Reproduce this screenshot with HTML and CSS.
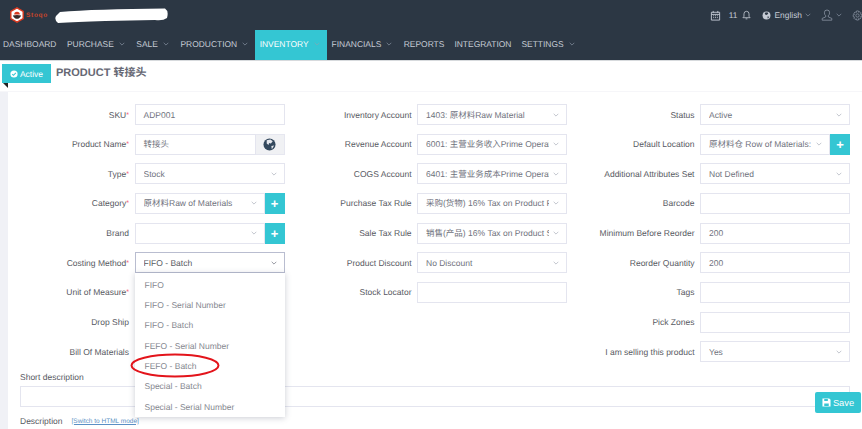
FILE: index.html
```html
<!DOCTYPE html>
<html lang="en">
<head>
<meta charset="utf-8">
<title>Product</title>
<link rel="stylesheet" href="styles.css">
</head>
<body>
<header class="top">
  <div class="topbar">
    <div class="brand-wrap">
      <svg class="logo" viewBox="0 0 14 16"><polygon points="7,0.8 13.2,4.4 13.2,11.6 7,15.2 0.8,11.6 0.8,4.4" fill="#fff" stroke="#d8381f" stroke-width="1.4"/><path d="M4.2 7.600a2.800 2.800 0 0 1 5.600 0z" fill="#d8381f"/><path d="M2.800 8.400 Q7 7.400 11.200 8.400 Q9.500 11.800 7 11.800 Q4.500 11.800 2.800 8.400Z" fill="#3a2a2a"/></svg>
      <span class="logo-text">Stoqo</span>
      <svg class="redact" viewBox="0 0 113 15" preserveAspectRatio="none"><path d="M5 4 Q40 1 110 .5 Q114 3 112 10 Q108 13 100 12 L50 13 Q20 14 3 15 Q-1 12 1 8Z" fill="#fff"/></svg>
    </div>
    <div class="tools">
      <svg class="ic cal" viewBox="0 0 12 12"><path d="M1.500 2.500h9v8.500h-9zM1.500 4.800h9M3.500 1v2M8.500 1v2" fill="none" stroke="#c5cbd5"/><path d="M3.500 6.300h1M5.500 6.300h1M7.500 6.300h1M3.500 8.300h1M5.500 8.300h1M7.500 8.300h1" stroke="#c5cbd5"/></svg>
      <span class="count">11</span>
      <svg class="ic bell" viewBox="0 0 10 11"><path d="M1 8.500h8L7.800 7V4.200a2.800 2.800 0 0 0-5.600 0V7zM4 9.800h2" fill="none" stroke="#c5cbd5" stroke-width=".9"/></svg>
      <svg class="ic globe" viewBox="0 0 10 10"><circle cx="5" cy="5" r="4.400" fill="#c5cbd5"/><path d="M3 2l3-.6 1 1.600-2 1.400-1.500-.4zM6 6l2 .3-1.500 2.200z" fill="#2c3744"/></svg>
      <span class="lang">English</span>
      <svg class="chev lang-chev" viewBox="0 0 6 4"><path d="M.7.8 3 3.100 5.300.8" fill="none" stroke="#7f8a99" stroke-width=".8"/></svg>
      <svg class="ic user" viewBox="0 0 12 12"><path d="M6 1a2.600 2.600 0 0 0-2.600 2.800c0 1.400.6 2.400 1.400 3L4.600 8 1.200 9.400v1.800h9.600V9.400L7.400 8 7.200 6.800c.8-.6 1.400-1.600 1.400-3A2.600 2.600 0 0 0 6 1z" fill="none" stroke="#8a94a3" stroke-width=".8"/></svg>
      <svg class="chev user-chev" viewBox="0 0 6 4"><path d="M.7.8 3 3.100 5.300.8" fill="none" stroke="#7f8a99" stroke-width=".8"/></svg>
      <svg class="ic gear" viewBox="0 0 12 12"><circle cx="6" cy="6" r="1.800" fill="none" stroke="#8a94a3" stroke-width=".8"/><path d="M5 1h2l.3 1.500 1.300-.7 1.400 1.400-.8 1.300 1.500.5v2l-1.500.3.800 1.300-1.400 1.400-1.300-.8L7 11H5l-.3-1.500-1.300.8L2 8.900l.8-1.300L1.300 7.200v-2l1.500-.4L2 3.500l1.400-1.400 1.300.7z" fill="none" stroke="#8a94a3" stroke-width=".8"/></svg>
    </div>
  </div>
  <nav class="nav">
    <a class="nav-item plain first">DASHBOARD</a>
    <a class="nav-item">PURCHASE<svg class="chev" viewBox="0 0 6 4"><path d="M.7.8 3 3.100 5.300.8" fill="none" stroke="#7f8a99" stroke-width=".8"/></svg></a>
    <a class="nav-item">SALE<svg class="chev" viewBox="0 0 6 4"><path d="M.7.8 3 3.100 5.300.8" fill="none" stroke="#7f8a99" stroke-width=".8"/></svg></a>
    <a class="nav-item">PRODUCTION<svg class="chev" viewBox="0 0 6 4"><path d="M.7.8 3 3.100 5.300.8" fill="none" stroke="#7f8a99" stroke-width=".8"/></svg></a>
    <a class="nav-item active">INVENTORY<svg class="chev" viewBox="0 0 6 4"><path d="M.7.8 3 3.100 5.300.8" fill="none" stroke="#7fa8b5" stroke-width=".8"/></svg></a>
    <a class="nav-item">FINANCIALS<svg class="chev" viewBox="0 0 6 4"><path d="M.7.8 3 3.100 5.300.8" fill="none" stroke="#7f8a99" stroke-width=".8"/></svg></a>
    <a class="nav-item plain">REPORTS</a>
    <a class="nav-item plain">INTEGRATION</a>
    <a class="nav-item">SETTINGS<svg class="chev" viewBox="0 0 6 4"><path d="M.7.8 3 3.100 5.300.8" fill="none" stroke="#7f8a99" stroke-width=".8"/></svg></a>
  </nav>
</header>

<section class="subheader">
  <div class="badge">
    <svg class="badge-ic" viewBox="0 0 10 10"><circle cx="5" cy="5" r="4.500" fill="#fff"/><path d="M2.800 5.100 4.400 6.700 7.300 3.600" fill="none" stroke="#34c6d3" stroke-width="1.300"/></svg>
    <span>Active</span>
  </div>
  <h1 class="title">PRODUCT 转接头</h1>
</section>

<main class="page">
  <div class="content">
    <div class="form">
      <div class="col col-1">
        <div class="field"><label class="lbl">SKU<i>*</i></label><div class="ctl input">ADP001</div></div>
        <div class="field"><label class="lbl">Product Name<i>*</i></label><div class="group"><div class="ctl input grow">转接头</div><div class="addon"><svg class="globe-big" viewBox="0 0 14 14"><circle cx="7" cy="7" r="6.500" fill="#34495e"/><path d="M4 2.500l4-1 2.500 2-2 2.500-2-.5-.5 2-2-1.500zM9 8.500l3-.5-2.500 4z" fill="#e6e8ee"/></svg></div></div></div>
        <div class="field"><label class="lbl">Type<i>*</i></label><div class="ctl select"><span class="val">Stock</span><svg class="chev" viewBox="0 0 6 4"><path d="M.7.8 3 3.100 5.300.8" fill="none" stroke="#b4b7c2" stroke-width=".8"/></svg></div></div>
        <div class="field"><label class="lbl">Category<i>*</i></label><div class="group"><div class="ctl select grow"><span class="val">原材料Raw of Materials</span><svg class="chev" viewBox="0 0 6 4"><path d="M.7.8 3 3.100 5.300.8" fill="none" stroke="#b4b7c2" stroke-width=".8"/></svg></div><div class="plus">+</div></div></div>
        <div class="field"><label class="lbl">Brand</label><div class="group"><div class="ctl select grow"><span class="val"></span><svg class="chev" viewBox="0 0 6 4"><path d="M.7.8 3 3.100 5.300.8" fill="none" stroke="#b4b7c2" stroke-width=".8"/></svg></div><div class="plus">+</div></div></div>
        <div class="field costing"><label class="lbl">Costing Method<i>*</i></label><div class="ctl select focus"><span class="val">FIFO - Batch</span><svg class="chev" viewBox="0 0 6 4"><path d="M.7.8 3 3.100 5.300.8" fill="none" stroke="#7d808c" stroke-width=".8"/></svg></div>
          <ul class="menu">
            <li>FIFO</li>
            <li>FIFO - Serial Number</li>
            <li>FIFO - Batch</li>
            <li>FEFO - Serial Number</li>
            <li class="circled">FEFO - Batch<svg class="ring" viewBox="0 0 90 25"><ellipse cx="45" cy="12.500" rx="43.500" ry="11" fill="none" stroke="#e3141b" stroke-width="2"/></svg></li>
            <li>Special - Batch</li>
            <li>Special - Serial Number</li>
          </ul>
        </div>
        <div class="field"><label class="lbl">Unit of Measure<i>*</i></label><div class="ctl-space"></div></div>
        <div class="field"><label class="lbl">Drop Ship</label><div class="ctl-space"></div></div>
        <div class="field"><label class="lbl">Bill Of Materials</label><div class="ctl-space"></div></div>
      </div>
      <div class="col col-2">
        <div class="field"><label class="lbl">Inventory Account</label><div class="ctl select"><span class="val">1403: 原材料Raw Material</span><svg class="chev" viewBox="0 0 6 4"><path d="M.7.8 3 3.100 5.300.8" fill="none" stroke="#b4b7c2" stroke-width=".8"/></svg></div></div>
        <div class="field"><label class="lbl">Revenue Account</label><div class="ctl select"><span class="val">6001: 主营业务收入Prime Operating Revenue</span><svg class="chev" viewBox="0 0 6 4"><path d="M.7.8 3 3.100 5.300.8" fill="none" stroke="#b4b7c2" stroke-width=".8"/></svg></div></div>
        <div class="field"><label class="lbl">COGS Account</label><div class="ctl select"><span class="val">6401: 主营业务成本Prime Operating Cost</span><svg class="chev" viewBox="0 0 6 4"><path d="M.7.8 3 3.100 5.300.8" fill="none" stroke="#b4b7c2" stroke-width=".8"/></svg></div></div>
        <div class="field"><label class="lbl">Purchase Tax Rule</label><div class="ctl select"><span class="val">采购(货物) 16% Tax on Product Purchases</span><svg class="chev" viewBox="0 0 6 4"><path d="M.7.8 3 3.100 5.300.8" fill="none" stroke="#b4b7c2" stroke-width=".8"/></svg></div></div>
        <div class="field"><label class="lbl">Sale Tax Rule</label><div class="ctl select"><span class="val">销售(产品) 16% Tax on Product Sales</span><svg class="chev" viewBox="0 0 6 4"><path d="M.7.8 3 3.100 5.300.8" fill="none" stroke="#b4b7c2" stroke-width=".8"/></svg></div></div>
        <div class="field"><label class="lbl">Product Discount</label><div class="ctl select"><span class="val">No Discount</span><svg class="chev" viewBox="0 0 6 4"><path d="M.7.8 3 3.100 5.300.8" fill="none" stroke="#b4b7c2" stroke-width=".8"/></svg></div></div>
        <div class="field"><label class="lbl">Stock Locator</label><div class="ctl input"></div></div>
      </div>
      <div class="col col-3">
        <div class="field"><label class="lbl">Status</label><div class="ctl select"><span class="val">Active</span><svg class="chev" viewBox="0 0 6 4"><path d="M.7.8 3 3.100 5.300.8" fill="none" stroke="#b4b7c2" stroke-width=".8"/></svg></div></div>
        <div class="field"><label class="lbl">Default Location</label><div class="group"><div class="ctl select grow"><span class="val">原材料仓 Row of Materials: Stock</span><svg class="chev" viewBox="0 0 6 4"><path d="M.7.8 3 3.100 5.300.8" fill="none" stroke="#b4b7c2" stroke-width=".8"/></svg></div><div class="plus">+</div></div></div>
        <div class="field"><label class="lbl">Additional Attributes Set</label><div class="ctl select"><span class="val">Not Defined</span><svg class="chev" viewBox="0 0 6 4"><path d="M.7.8 3 3.100 5.300.8" fill="none" stroke="#b4b7c2" stroke-width=".8"/></svg></div></div>
        <div class="field"><label class="lbl">Barcode</label><div class="ctl input"></div></div>
        <div class="field"><label class="lbl">Minimum Before Reorder</label><div class="ctl input">200</div></div>
        <div class="field"><label class="lbl">Reorder Quantity</label><div class="ctl input">200</div></div>
        <div class="field"><label class="lbl">Tags</label><div class="ctl input"></div></div>
        <div class="field"><label class="lbl">Pick Zones</label><div class="ctl input"></div></div>
        <div class="field"><label class="lbl">I am selling this product</label><div class="ctl select"><span class="val">Yes</span><svg class="chev" viewBox="0 0 6 4"><path d="M.7.8 3 3.100 5.300.8" fill="none" stroke="#b4b7c2" stroke-width=".8"/></svg></div></div>
      </div>
    </div>
    <div class="wide">
      <div class="wide-label">Short description</div>
      <div class="ctl input full"></div>
      <div class="desc"><span class="wide-label">Description</span><a class="switch">[Switch to HTML mode]</a></div>
    </div>
  </div>
</main>

<button class="save"><svg class="save-ic" viewBox="0 0 10 10"><path d="M.5.500h7.500l1.500 1.500v7.500H.5z" fill="#fff"/><path d="M2.500 1.200h4v2h-4zM2.500 6h5v3h-5z" fill="#34c6d3"/></svg>Save</button>
</body>
</html>
```
FILE: styles.css
```css
* { box-sizing: border-box; }
html, body { margin: 0; height: 100%; overflow: hidden; }
body { font-family: "Liberation Sans", "Noto Sans CJK SC", sans-serif; font-size: 8.5px; color: #575962; background: #fff; text-rendering: geometricPrecision; }

.top { background: #2c3744; height: 61px; border-bottom: 1px solid #d7dadd; }
.topbar { height: 30px; display: flex; justify-content: space-between; align-items: center; }
.brand-wrap { display: flex; align-items: center; padding-left: 10px; }
.logo { width: 14px; height: 16px; }
.logo-text { font-size: 6.5px; font-weight: 700; color: #c8452a; letter-spacing: .7px; margin-left: 2px; width: 29px; }
.redact { width: 113px; height: 15px; }
.tools { display: flex; align-items: center; color: #c5cbd5; font-size: 8.4px; }
.ic { display: block; }
.cal { width: 11px; height: 11px; margin-right: 8px; }
.count { margin-right: 4px; }
.bell { width: 9px; height: 10px; margin-right: 11px; }
.globe { width: 9px; height: 9px; margin-right: 4px; }
.lang-chev { margin: 0 10px 0 3px; }
.user { width: 12px; height: 12px; margin-right: 3px; }
.user-chev { margin-right: 10px; }
.gear { width: 11px; height: 11px; margin-right: -1px; }
.chev { width: 6px; height: 4px; flex: none; display: block; }

.nav { height: 30px; display: flex; }
.nav-item { display: flex; align-items: center; color: #c5cbd5; font-size: 8.45px; padding: 0 6.5px 3px 5px; white-space: nowrap; }
.nav-item .chev { margin-left: 5px; }
.nav-item.plain { padding-right: 5px; }
.nav-item.first { padding-left: 3px; padding-right: 5.5px; }
.nav-item.active { background: #34c6d3; color: #fff; padding-right: 7px; }

.subheader { height: 31px; display: flex; align-items: flex-start; border-bottom: 1px solid #f6f6f9; position: relative; }
.badge { margin: 3px 0 0 2px; width: 49px; height: 19px; background: #34c6d3; color: #fff; display: flex; align-items: center; justify-content: center; gap: 2px; font-size: 8.5px; position: relative; }
.badge::after { content: ""; position: absolute; left: 1px; top: 19px; border-style: solid; border-width: 5px 5px 0 0; border-color: #222 transparent transparent transparent; transform: scaleX(-1); }
.badge-ic { width: 8px; height: 8px; }
.title { margin: 0 0 0 5px; font-size: 11px; font-weight: 700; color: #666874; line-height: 24px; }

.page { background: #f0f1f6; padding-left: 8px; height: 340px; }
.content { background: #fff; height: 100%; padding-top: 12px; }
.form { display: flex; height: 267px; }
.col { display: flex; flex-direction: column; gap: 8.67px; }
.col-1 { width: 276.5px; }
.col-2 { width: 282.5px; }
.col-3 { width: 283px; }
.field { display: flex; height: 21px; align-items: center; flex: none; }
.costing { position: relative; }
.lbl { flex: 1; text-align: right; padding-right: 5.5px; white-space: nowrap; }
.lbl i { color: #f4516c; font-style: normal; font-size: 7px; vertical-align: 1px; }
.ctl { width: 150px; height: 21px; border: 1px solid #e4e5ef; background: #fff; display: flex; align-items: center; padding-left: 8px; flex: none; color: #6f727d; }
.ctl-space { width: 150px; flex: none; }
.select { padding-right: 7px; }
.val { flex: 1; overflow: hidden; white-space: nowrap; margin-right: 4.5px; }
.group { display: flex; width: 150px; flex: none; }
.grow { flex: 1; width: auto; min-width: 0; }
.addon { width: 29px; height: 21px; background: #f0f1f4; border: 1px solid #e6e7f0; border-left: 0; display: flex; align-items: center; justify-content: center; }
.globe-big { width: 13px; height: 13px; }
.plus { width: 20px; height: 21px; background: #34c6d3; color: #fff; font-weight: 700; font-size: 13px; display: flex; align-items: center; justify-content: center; flex: none; }
.focus { border-color: #b9bdd0; color: #575962; }

.menu { list-style: none; margin: 0; padding: 1.5px 0 0; position: absolute; left: 126.5px; top: 21px; width: 150px; height: 144px; background: #fff; box-shadow: 0 1px 6px rgba(80,85,110,.3); z-index: 5; }
.menu li { height: 20.3px; line-height: 20.3px; padding-left: 10px; color: #85878f; position: relative; }
.ring { position: absolute; left: -5px; top: -2.5px; width: 90px; height: 25px; }

.wide { padding: 0 0 0 12px; }
.wide-label { color: #575962; }
.wide > .wide-label { height: 12px; line-height: 12px; margin-bottom: 2.5px; }
.full { width: 830px; }
.desc { margin-top: 9.5px; display: flex; align-items: center; gap: 9px; }
.switch { color: #5a8fc4; font-size: 6.5px; text-decoration: underline; }

.save { position: fixed; left: 815px; top: 392px; width: 46px; height: 21px; background: #34c6d3; color: #fff; border: 0; border-radius: 2px; font: 9.3px "Liberation Sans", sans-serif; display: flex; align-items: center; justify-content: center; gap: 2px; padding: 0; z-index: 6; }
.save-ic { width: 9px; height: 9px; }
```
